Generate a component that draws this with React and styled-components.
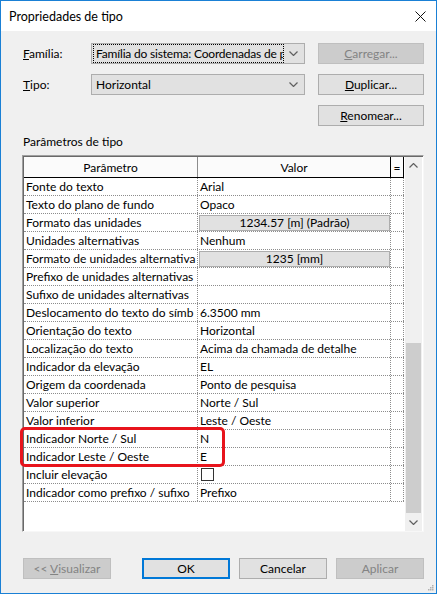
import React from 'react'
import styled, { createGlobalStyle } from 'styled-components'

const GlobalStyle = createGlobalStyle`
    html, body {
        margin: 0;
        padding: 0;
        background: #ffffff;
    }
    * {
        box-sizing: border-box;
    }
    body {
        font-family: Lato, "Noto Sans", sans-serif;
        font-size: 12px;
        color: #000000;
    }
`

const Window = styled.div`
    width: 437px;
    height: 594px;
    border: 1px solid #1a80d5;
    background: #f0f0f0;
    display: flex;
    flex-direction: column;
    position: relative;
`

const TitleBar = styled.div`
    height: 30px;
    background: #ffffff;
    display: flex;
    align-items: center;
    justify-content: space-between;
    padding: 0 10px 0 8px;
`

const Title = styled.div`
    font-size: 12.5px;
    color: #000000;
`

const CloseBox = styled.div`
    width: 12px;
    height: 12px;
    display: flex;
    align-items: center;
    justify-content: center;
`

const Body = styled.div`
    flex: 1;
    padding: 12px 12px 0 21px;
    display: flex;
    flex-direction: column;
`

const TopGrid = styled.div`
    display: grid;
    grid-template-columns: 56px 214px 106px;
    column-gap: 13px;
    row-gap: 10px;
    grid-auto-rows: 21px;
`

const FieldLabel = styled.div`
    display: flex;
    align-items: center;
    padding-left: 1px;
`

const Combo = styled.div`
    border: 1px solid #adadad;
    background: #e1e1e1;
    display: flex;
    align-items: center;
    padding: 0 6px 0 2px;
    gap: 6px;
`

const ComboText = styled.div`
    flex: 1;
    height: 17px;
    display: flex;
    align-items: center;
    padding-left: 2px;
    white-space: nowrap;
    overflow: hidden;
    letter-spacing: ${p => (p.$focused ? '-0.2px' : '0')};
    outline: ${p => (p.$focused ? '1px dotted #000000' : 'none')};
`

const Button = styled.div`
    height: 21px;
    border: ${p => (p.$default ? '2px solid' : '1px solid')};
    border-color: ${p => (p.$default ? '#0078d7' : p.$disabled ? '#bfbfbf' : '#adadad')};
    background: ${p => (p.$disabled ? '#cccccc' : '#e1e1e1')};
    color: ${p => (p.$disabled ? '#838383' : '#000000')};
    display: flex;
    align-items: center;
    justify-content: center;
    white-space: nowrap;
    grid-column: ${p => p.$col || 'auto'};
    width: ${p => (p.$width ? p.$width + 'px' : 'auto')};
`

const SectionLabel = styled.div`
    margin-top: 8px;
    height: 16px;
    line-height: 16px;
    padding-left: 1px;
`

const Panel = styled.div`
    margin-top: 5px;
    height: 377px;
    border: 1px solid;
    border-color: #a0a0a0 #f7f7f7 #f7f7f7 #a0a0a0;
    box-shadow: inset 1px 1px 0 #696969;
    padding: 1px 0 0 1px;
    background: #ffffff;
    display: flex;
    position: relative;
`

const Table = styled.div`
    width: 380px;
    display: flex;
    flex-direction: column;
`

const Row = styled.div`
    display: grid;
    grid-template-columns: 174px 193px 13px;
    height: ${p => (p.$header ? '21px' : '18px')};
    border-bottom: ${p => (p.$header ? '1px solid #000000' : '1px dotted #8c8c8c')};
    background: ${p => (p.$header ? '#fbfbfb' : '#ffffff')};
`

const Cell = styled.div`
    border-right: ${p => (p.$header ? '1px solid' : '1px dotted')};
    border-right-color: ${p => (p.$header && p.$dark ? '#000000' : '#8c8c8c')};
    display: flex;
    align-items: center;
    justify-content: ${p => (p.$header ? 'center' : 'flex-start')};
    padding: ${p => (p.$header ? '0' : '0 0 0 2px')};
    white-space: nowrap;
    overflow: hidden;
`

const ValueButton = styled.div`
    flex: 1;
    height: 16px;
    margin-left: -1px;
    border: 1px solid #adadad;
    background: #e1e1e1;
    display: flex;
    align-items: center;
    justify-content: center;
`

const CheckBox = styled.div`
    width: 13px;
    height: 13px;
    margin-left: 1px;
    border: 1px solid #333333;
    background: #ffffff;
`

const Scrollbar = styled.div`
    width: 17px;
    margin-left: 1px;
    background: #f0f0f0;
    display: flex;
    flex-direction: column;
`

const ScrollArrow = styled.div`
    height: 17px;
    display: flex;
    align-items: center;
    justify-content: center;
`

const ScrollTrack = styled.div`
    flex: 1;
    display: flex;
    flex-direction: column;
    justify-content: flex-end;
    padding-bottom: 1px;
`

const Thumb = styled.div`
    height: 170px;
    margin: 0 1px;
    background: #cdcdcd;
`

const Highlight = styled.div`
    position: absolute;
    left: -3px;
    top: 271px;
    width: 205px;
    height: 40px;
    border: 3px solid #e8141c;
    border-radius: 5px;
    pointer-events: none;
`

const Footer = styled.div`
    margin-top: 26px;
    padding-left: 1px;
    display: flex;
    gap: 9px;
`

const Spacer = styled.div`
    flex: 1;
`

const Grip = styled.svg`
    position: absolute;
    right: 2px;
    bottom: 2px;
`

const rows = [
    ['Fonte do texto', 'Arial'],
    ['Texto do plano de fundo', 'Opaco'],
    ['Formato das unidades', '1234.57 [m] (Padrão)', 'button'],
    ['Unidades alternativas', 'Nenhum'],
    ['Formato de unidades alternativa', '1235 [mm]', 'button'],
    ['Prefixo de unidades alternativas', ''],
    ['Sufixo de unidades alternativas', ''],
    ['Deslocamento do texto do símb', '6.3500 mm'],
    ['Orientação do texto', 'Horizontal'],
    ['Localização do texto', 'Acima da chamada de detalhe'],
    ['Indicador da elevação', 'EL'],
    ['Origem da coordenada', 'Ponto de pesquisa'],
    ['Valor superior', 'Norte / Sul'],
    ['Valor inferior', 'Leste / Oeste'],
    ['Indicador Norte / Sul', 'N'],
    ['Indicador Leste / Oeste', 'E'],
    ['Incluir elevação', '', 'check'],
    ['Indicador como prefixo / sufixo', 'Prefixo'],
]

const Chevron = ({ up }) => (
    <svg width="9" height="5" viewBox="0 0 9 5">
        <path d={up ? 'M0.5 4.5 L4.5 0.5 L8.5 4.5' : 'M0.5 0.5 L4.5 4.5 L8.5 0.5'} fill="none" stroke="#606060" strokeWidth="1.2" />
    </svg>
)

const App = () => {
    return (
        <>
            <GlobalStyle />
            <Window>
                <TitleBar>
                    <Title>Propriedades de tipo</Title>
                    <CloseBox>
                        <svg width="11" height="11" viewBox="0 0 11 11">
                            <path d="M0.5 0.5 L10.5 10.5 M10.5 0.5 L0.5 10.5" stroke="#111111" strokeWidth="1" />
                        </svg>
                    </CloseBox>
                </TitleBar>
                <Body>
                    <TopGrid>
                        <FieldLabel><span><u>F</u>amília:</span></FieldLabel>
                        <Combo>
                            <ComboText $focused>Família do sistema: Coordenadas de por</ComboText>
                            <Chevron />
                        </Combo>
                        <Button $disabled><span><u>C</u>arregar...</span></Button>

                        <FieldLabel><span><u>T</u>ipo:</span></FieldLabel>
                        <Combo>
                            <ComboText>Horizontal</ComboText>
                            <Chevron />
                        </Combo>
                        <Button><span><u>D</u>uplicar...</span></Button>

                        <Button $col="3"><span><u>R</u>enomear...</span></Button>
                    </TopGrid>

                    <SectionLabel>Parâmetros de tipo</SectionLabel>

                    <Panel>
                        <Table>
                            <Row $header>
                                <Cell $header>Parâmetro</Cell>
                                <Cell $header $dark>Valor</Cell>
                                <Cell $header $dark>=</Cell>
                            </Row>
                            {rows.map(([name, value, kind]) => (
                                <Row key={name}>
                                    <Cell>{name}</Cell>
                                    <Cell>
                                        {kind === 'button' && <ValueButton>{value}</ValueButton>}
                                        {kind === 'check' && <CheckBox />}
                                        {!kind && value}
                                    </Cell>
                                    <Cell />
                                </Row>
                            ))}
                        </Table>
                        <Scrollbar>
                            <ScrollArrow><Chevron up /></ScrollArrow>
                            <ScrollTrack>
                                <Thumb />
                            </ScrollTrack>
                            <ScrollArrow><Chevron /></ScrollArrow>
                        </Scrollbar>
                        <Highlight />
                    </Panel>

                    <Footer>
                        <Button $disabled $width={88}><span>&lt;&lt; <u>V</u>isualizar</span></Button>
                        <Spacer />
                        <Button $default $width={88}>OK</Button>
                        <Button $width={88}>Cancelar</Button>
                        <Button $disabled $width={88}>Aplicar</Button>
                    </Footer>
                </Body>
                <Grip width="7" height="7" viewBox="0 0 7 7">
                    <rect x="5" y="1" width="1.5" height="1.5" fill="#b0b0b0" />
                    <rect x="3" y="3" width="1.5" height="1.5" fill="#b0b0b0" />
                    <rect x="5" y="3" width="1.5" height="1.5" fill="#b0b0b0" />
                    <rect x="1" y="5" width="1.5" height="1.5" fill="#b0b0b0" />
                    <rect x="3" y="5" width="1.5" height="1.5" fill="#b0b0b0" />
                    <rect x="5" y="5" width="1.5" height="1.5" fill="#b0b0b0" />
                </Grip>
            </Window>
        </>
    )
}

export default App
